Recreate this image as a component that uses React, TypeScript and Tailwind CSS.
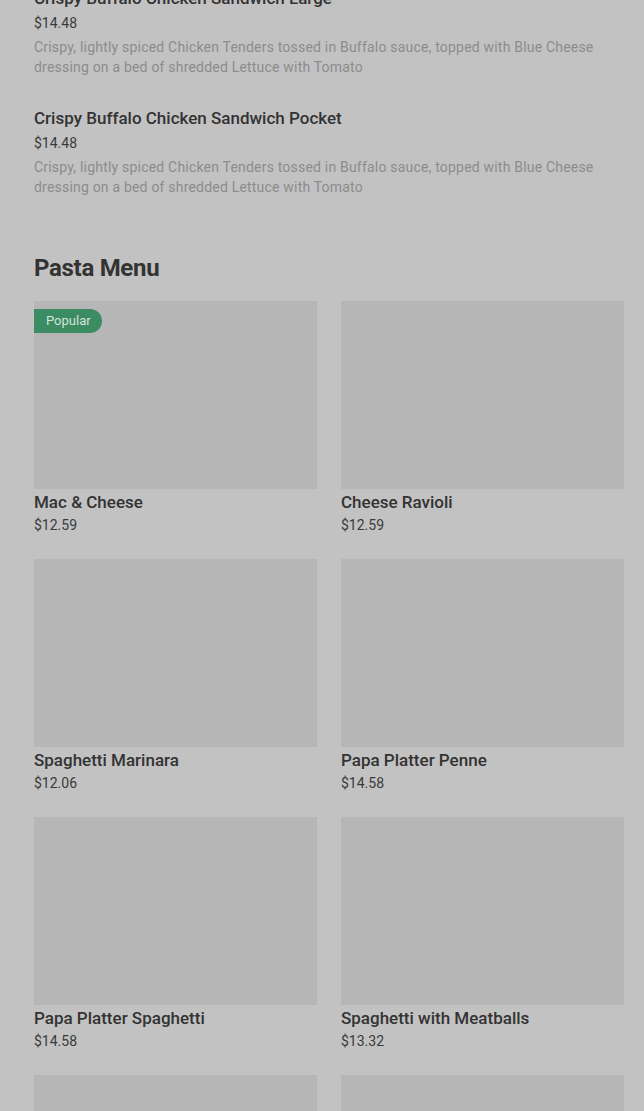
import React from "react";

const items = [
  { name: "Mac & Cheese", price: "$12.59", popular: true },
  { name: "Cheese Ravioli", price: "$12.59" },
  { name: "Spaghetti Marinara", price: "$12.06" },
  { name: "Papa Platter Penne", price: "$14.58" },
  { name: "Papa Platter Spaghetti", price: "$14.58" },
  { name: "Spaghetti with Meatballs", price: "$13.32" },
  { name: "Baked Ziti", price: "$13.32" },
  { name: "Chicken Alfredo", price: "$14.58" },
];

const desc =
  "Crispy, lightly spiced Chicken Tenders tossed in Buffalo sauce, topped with Blue Cheese dressing on a bed of shredded Lettuce with Tomato";

function ListItem({ name }: { name: string }) {
  return (
    <div className="flex flex-col">
      <div className="text-[17px] leading-[22px] font-medium text-[#333333]">{name}</div>
      <div className="mt-[4px] text-[14px] leading-[20px] text-[#3a3a3a]">$14.48</div>
      <div className="mt-[4px] text-[14px] leading-[20px] tracking-[0.2px] text-[#8c8c8c]">{desc}</div>
    </div>
  );
}

export default function App() {
  return (
    <div
      className="min-h-[1111px] w-[644px] overflow-hidden bg-[#c2c2c2] pl-[34px] pr-[20px]"
      style={{ fontFamily: "Roboto, 'Noto Sans', sans-serif" }}
    >
      <div className="-mt-[13px] flex flex-col gap-[30px]">
        <ListItem name="Crispy Buffalo Chicken Sandwich Large" />
        <ListItem name="Crispy Buffalo Chicken Sandwich Pocket" />
      </div>
      <h2 className="mt-[55px] text-[24px] leading-[32px] font-bold tracking-[-0.3px] text-[#333333]">
        Pasta Menu
      </h2>
      <div className="mt-[17px] grid grid-cols-2 gap-x-[24px] gap-y-[24px]">
        {items.map((it) => (
          <div key={it.name} className="flex flex-col">
            <div className="relative h-[188px] bg-[#b6b6b6]">
              {it.popular && (
                <div className="absolute left-0 top-[8px] flex h-[24px] items-center rounded-r-full bg-[#3b8b63] pl-[12px] pr-[11px] text-[13px] text-[#d3e4da]">
                  Popular
                </div>
              )}
            </div>
            <div className="mt-[2px] text-[17px] leading-[22px] font-medium text-[#333333]">{it.name}</div>
            <div className="mt-[2px] text-[14px] leading-[20px] text-[#3a3a3a]">{it.price}</div>
          </div>
        ))}
      </div>
    </div>
  );
}
